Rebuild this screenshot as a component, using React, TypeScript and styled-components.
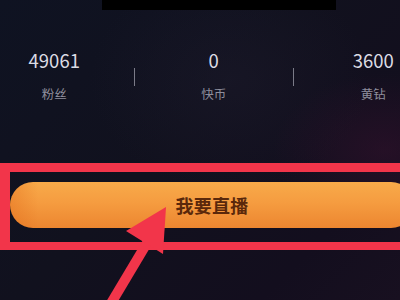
import React from "react";
import styled, { createGlobalStyle } from "styled-components";

const Global = createGlobalStyle`
  html, body { margin: 0; padding: 0; background: #11121f; overflow: hidden; }
  * { box-sizing: border-box; }
`;

const Page = styled.div`
  position: relative;
  width: 400px;
  height: 300px;
  overflow: hidden;
  font-family: "Noto Sans CJK SC", "Noto Sans", sans-serif;
  background:
    radial-gradient(ellipse 160px 110px at 385px 150px, rgba(60, 18, 48, 0.45), transparent 70%),
    radial-gradient(ellipse 200px 160px at 230px 80px, rgba(36, 32, 52, 0.3), transparent 70%),
    linear-gradient(135deg, #0f1322 0%, #11111e 45%, #130e1e 80%, #181020 100%);
  display: flex;
  flex-direction: column;
`;

const TopBlock = styled.div`
  width: 234px;
  height: 10px;
  margin-left: 102px;
  background: #000;
`;

const StatsRow = styled.div`
  display: grid;
  grid-template-columns: 158.5px 1px 158.5px 1px 158.5px;
  margin-left: -25px;
  margin-top: 38px;
  width: 478px;
`;

const Stat = styled.div`
  display: flex;
  flex-direction: column;
  align-items: center;
`;

const Value = styled.div`
  font-size: 18.5px;
  line-height: 24px;
  color: #dcdce4;
  font-weight: 400;
`;

const Label = styled.div`
  margin-top: 14px;
  font-size: 12.5px;
  line-height: 16px;
  color: #8e8e9c;
`;

const Divider = styled.div`
  width: 1px;
  height: 18px;
  margin-top: 20px;
  background: #7b7b88;
`;

const Highlight = styled.div`
  margin-top: 61px;
  width: 430px;
  border: solid #f2354a;
  border-width: 9px 0 8px 10px;
  padding: 10px 0 14px 0;
`;

const LiveButton = styled.div`
  width: 404px;
  height: 46px;
  border-radius: 23px;
  display: flex;
  align-items: center;
  justify-content: center;
  background:
    linear-gradient(90deg, rgba(225, 105, 25, 0.4) 0%, rgba(0, 0, 0, 0) 7%),
    linear-gradient(180deg, #f8aa4a 0%, #f59c40 45%, #ec8630 100%);
  color: #5a280b;
  font-size: 18px;
  font-weight: 700;
  letter-spacing: 0.3px;
`;

const Arrow = styled.svg`
  position: absolute;
  left: 0;
  top: 0;
  pointer-events: none;
`;

export default function App() {
  const stats = [
    { value: "49061", label: "粉丝" },
    { value: "0", label: "快币" },
    { value: "3600", label: "黄钻" },
  ];
  return (
    <>
      <Global />
      <Page>
        <TopBlock />
        <StatsRow>
          {stats.map((s, i) => (
            <React.Fragment key={s.label}>
              {i > 0 && <Divider />}
              <Stat>
                <Value>{s.value}</Value>
                <Label>{s.label}</Label>
              </Stat>
            </React.Fragment>
          ))}
        </StatsRow>
        <Highlight>
          <LiveButton>我要直播</LiveButton>
        </Highlight>
        <Arrow width="400" height="300" viewBox="0 0 400 300">
          <line x1="110" y1="305" x2="150" y2="238" stroke="#f2354a" strokeWidth="10" />
          <polygon points="166,207 126,231 163,254" fill="#f2354a" />
        </Arrow>
      </Page>
    </>
  );
}
